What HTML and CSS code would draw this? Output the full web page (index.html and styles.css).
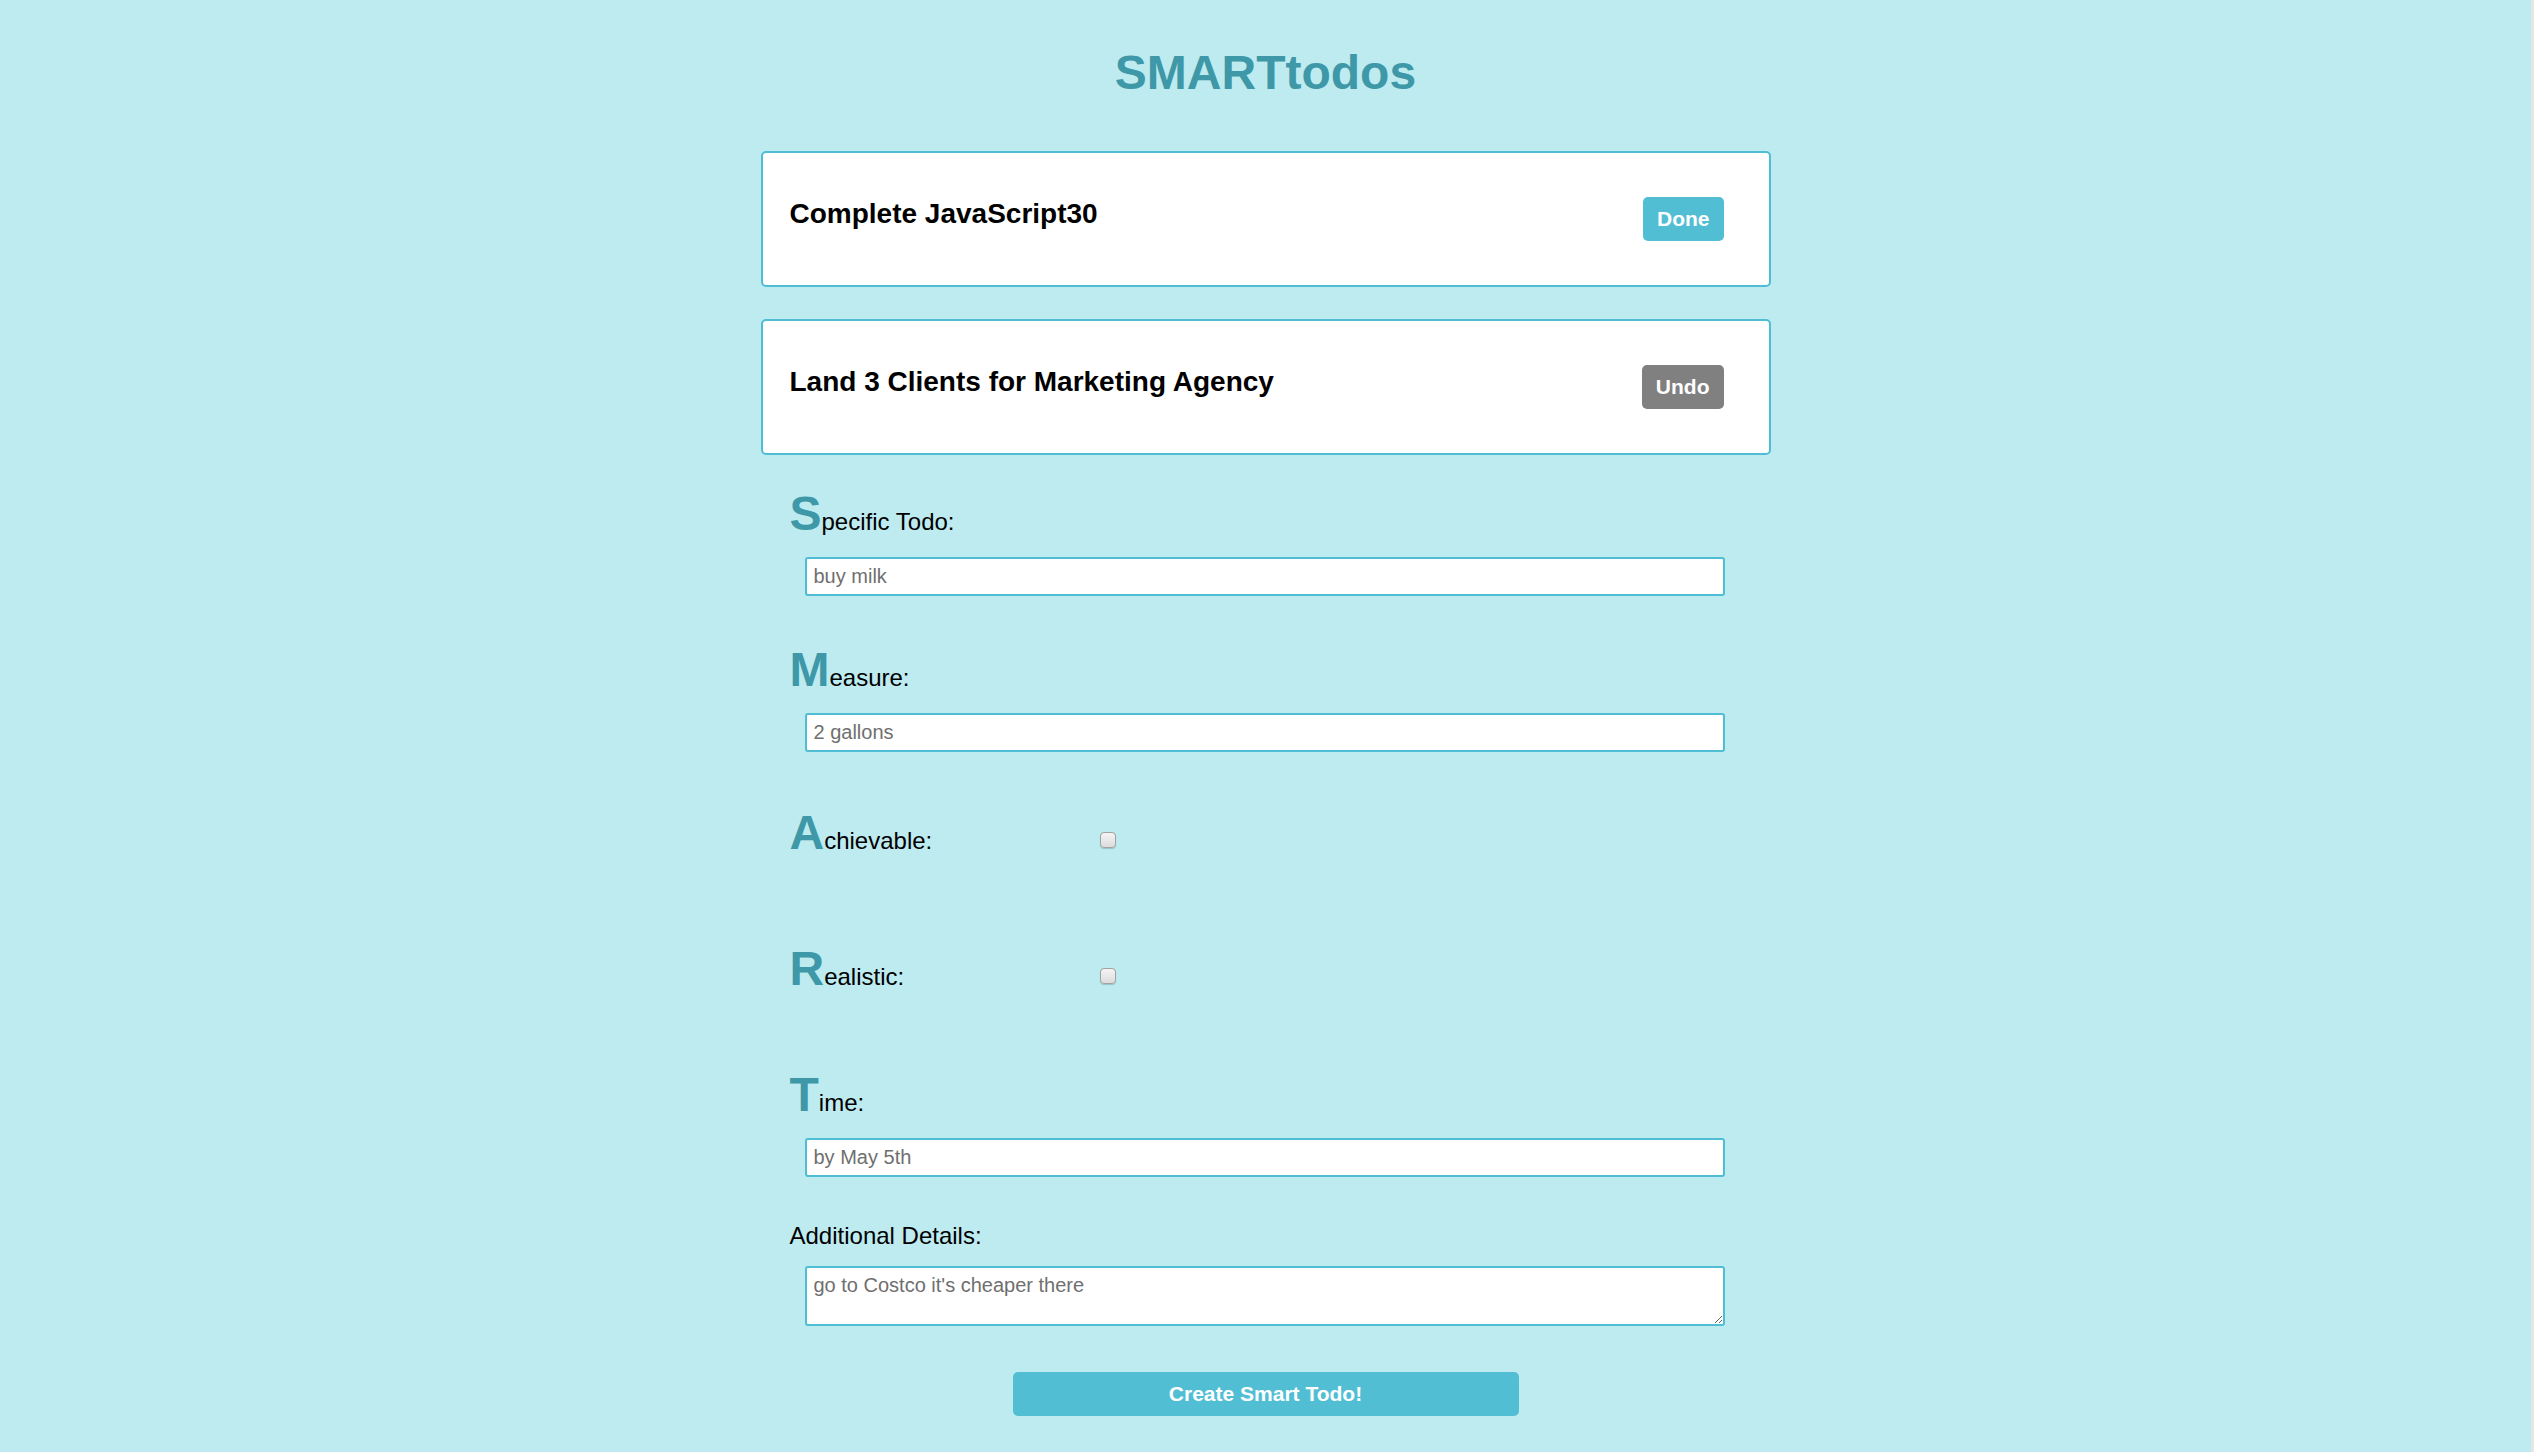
FILE: index.html
```html
<!DOCTYPE html>
<html lang="en">
<head>
<meta charset="utf-8">
<title>SMARTtodos</title>
<link rel="stylesheet" href="styles.css">
</head>
<body>
<main class="app">
  <h1 class="title">SMARTtodos</h1>

  <div class="todo">
    <h3 class="todo-text">Complete JavaScript30</h3>
    <button class="btn btn-done">Done</button>
  </div>
  <div class="todo">
    <h3 class="todo-text">Land 3 Clients for Marketing Agency</h3>
    <button class="btn btn-undo">Undo</button>
  </div>

  <form class="form">
    <div class="field field-s">
      <label class="label"><span class="big">S</span><span class="rest">pecific Todo:</span></label>
      <input class="input" type="text" placeholder="buy milk">
    </div>
    <div class="field field-m">
      <label class="label"><span class="big">M</span><span class="rest">easure:</span></label>
      <input class="input" type="text" placeholder="2 gallons">
    </div>
    <div class="check-row field-a">
      <label class="label label-fixed"><span class="big">A</span><span class="rest">chievable:</span></label>
      <input class="check" type="checkbox">
    </div>
    <div class="check-row field-r">
      <label class="label label-fixed"><span class="big">R</span><span class="rest">ealistic:</span></label>
      <input class="check" type="checkbox">
    </div>
    <div class="field field-t">
      <label class="label"><span class="big">T</span><span class="rest">ime:</span></label>
      <input class="input" type="text" placeholder="by May 5th">
    </div>
    <div class="field field-d">
      <label class="plain-label">Additional Details:</label>
      <textarea class="textarea" placeholder="go to Costco it's cheaper there"></textarea>
    </div>
    <div class="submit-row">
      <button type="button" class="btn-create">Create Smart Todo!</button>
    </div>
  </form>
</main>
</body>
</html>
```

FILE: styles.css
```css
html {
  background: #e6e6e6;
}

body {
  margin: 0 3px 0 0;
  background: #bdebf0;
  min-height: 1452px;
  font-family: "Liberation Sans", Arial, Helvetica, sans-serif;
  color: #000;
}

.app {
  width: 1010px;
  margin: 0 auto;
  padding-top: 49px;
}

.title {
  margin: 0 0 55px 0;
  font-size: 48px;
  line-height: 47px;
  font-weight: 700;
  color: #3e98a8;
  text-align: center;
}

.todo {
  box-sizing: border-box;
  height: 136px;
  background: #ffffff;
  border: 2px solid #4fbdd4;
  border-radius: 5px;
  display: flex;
  align-items: center;
  justify-content: space-between;
  padding: 0 45px 0 27px;
  margin-bottom: 32px;
}

.todo-text {
  margin: 0 0 10px 0;
  font-size: 28px;
  line-height: 28px;
  font-weight: 700;
}

.btn {
  box-sizing: border-box;
  height: 44px;
  padding: 0 14px;
  border: none;
  border-radius: 5px;
  color: #ffffff;
  font-family: "Liberation Sans", Arial, sans-serif;
  font-size: 21px;
  font-weight: 700;
}

.btn-done {
  background: #51bed4;
}

.btn-undo {
  background: #808080;
}

.form {
  padding: 3px 29px 0 29px;
}

.label {
  display: flex;
  align-items: baseline;
  height: 48px;
}

.big {
  font-size: 48px;
  line-height: 48px;
  font-weight: 700;
  color: #3e98a8;
}

.rest {
  font-size: 24px;
  line-height: 24px;
}

.field {
  display: flex;
  flex-direction: column;
}

.input {
  box-sizing: border-box;
  width: 920px;
  height: 39px;
  margin: 19px 0 0 15px;
  padding: 0 7px;
  border: 2px solid #4fbdd4;
  border-radius: 3px;
  background: #fff;
  font-family: "Liberation Sans", Arial, sans-serif;
  font-size: 20px;
  outline: none;
}

.input::placeholder,
.textarea::placeholder {
  color: #6f6f6f;
}

.field-m {
  margin-top: 50px;
}

.check-row {
  display: flex;
  align-items: flex-start;
}

.label-fixed {
  width: 310px;
}

.check {
  -webkit-appearance: none;
  appearance: none;
  box-sizing: border-box;
  width: 16px;
  height: 16px;
  margin: 23px 0 0 0;
  border: 1px solid #a2a2a2;
  border-radius: 4px;
  background: linear-gradient(#f4f4f4, #dcdcdc);
  box-shadow: 0 1px 1px rgba(0, 0, 0, 0.18);
}

.field-a {
  margin-top: 57px;
}

.field-r {
  margin-top: 88px;
}

.field-t {
  margin-top: 78px;
}

.field-d {
  margin-top: 47px;
}

.plain-label {
  font-size: 24px;
  line-height: 24px;
}

.textarea {
  box-sizing: border-box;
  width: 920px;
  height: 60px;
  margin: 18px 0 0 15px;
  padding: 6px 7px;
  border: 2px solid #4fbdd4;
  border-radius: 3px;
  background: #fff;
  font-family: "Liberation Sans", Arial, sans-serif;
  font-size: 20px;
  outline: none;
}

.submit-row {
  display: flex;
  justify-content: center;
  margin-top: 46px;
}

.btn-create {
  width: 506px;
  height: 44px;
  border: none;
  border-radius: 5px;
  background: #51bed4;
  color: #fff;
  font-family: "Liberation Sans", Arial, sans-serif;
  font-size: 21px;
  font-weight: 700;
}
```
